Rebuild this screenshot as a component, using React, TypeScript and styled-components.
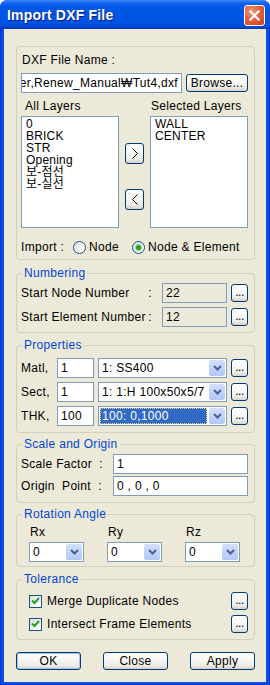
import React from 'react';
import styled, { createGlobalStyle } from 'styled-components';

const GlobalStyle = createGlobalStyle`
  html, body {
    margin: 0;
    padding: 0;
    background: #ffffff;
  }
  body {
    font-family: "Liberation Sans", "Noto Sans CJK KR", sans-serif;
    font-size: 12px;
    letter-spacing: 0.3px;
    color: #000000;
  }
  * {
    box-sizing: border-box;
  }
`;

const allLayers = ['0', 'BRICK', 'STR', 'Opening', '보-점선', '보-실선'];
const selectedLayers = ['WALL', 'CENTER'];

const Window = styled.div`
  width: 270px;
  height: 685px;
  display: flex;
  flex-direction: column;
  background: #0A4FE2;
  border-radius: 8px 8px 0 0;
  box-shadow: inset 1px 0 #0831D9, inset -1px 0 #0831D9, inset 0 -1px #0831D9;
  overflow: hidden;
`;

const TitleBar = styled.div`
  height: 29px;
  flex: none;
  display: flex;
  align-items: center;
  justify-content: space-between;
  padding: 0 5px 0 7px;
  background: linear-gradient(180deg, #3E8DF7 0%, #1566F0 10%, #0458E6 22%, #0055E5 50%, #0053E2 80%, #0346D1 93%, #0137B0 100%);
`;

const Title = styled.span`
  font-family: "Liberation Sans", sans-serif;
  font-weight: bold;
  font-size: 14px;
  letter-spacing: 0.2px;
  color: #ffffff;
  text-shadow: 1px 1px #0A1E7A;
  padding-top: 1px;
`;

const CloseButton = styled.div`
  width: 21px;
  height: 21px;
  border: 1px solid #ffffff;
  border-radius: 3px;
  background: radial-gradient(circle at 35% 30%, #F29A7E 0%, #E4603F 45%, #C9401F 100%);
  display: flex;
  align-items: center;
  justify-content: center;
  margin-top: 2px;
`;

const Client = styled.div`
  flex: 1;
  margin: 0 4px 3px 4px;
  background: #ECE9D8;
  display: flex;
  flex-direction: column;
`;

const Group = styled.fieldset<{ $mt: number; $pt: number; $pb: number }>`
  margin: ${p => p.$mt}px 11px 0 12px;
  padding: ${p => p.$pt}px 6px ${p => p.$pb}px 4px;
  border: 1px solid #D0D0BF;
  border-radius: 4px;
  min-width: 0;
`;

const Legend = styled.legend`
  padding: 0 2px;
  margin-left: 1px;
  color: #0046D5;
  font-size: 12px;
  line-height: 14px;
`;

const Text = styled.div<{ $indent?: number }>`
  line-height: 14px;
  height: 14px;
  white-space: nowrap;
  padding-left: ${p => p.$indent ?? 0}px;
`;

const Field = styled.div<{ $readonly?: boolean; $alignEnd?: boolean }>`
  height: 20px;
  border: 1px solid #7F9DB9;
  background: ${p => (p.$readonly ? '#ECE9D8' : '#ffffff')};
  padding: 1px 3px 0 3px;
  line-height: 16px;
  white-space: nowrap;
  overflow: hidden;
  min-width: 0;
  display: flex;
  justify-content: ${p => (p.$alignEnd ? 'flex-end' : 'flex-start')};
`;

const Button = styled.div<{ $w: number; $h: number; $default?: boolean }>`
  width: ${p => p.$w}px;
  height: ${p => p.$h}px;
  flex: none;
  border: 1px solid #003C74;
  border-radius: 3px;
  background: linear-gradient(180deg, #FFFFFF 0%, #F6F6F2 45%, #ECEBE6 80%, #D6D0C5 100%);
  box-shadow: ${p => (p.$default ? 'inset 0 0 0 1px #A8C4F0' : 'none')};
  display: flex;
  align-items: center;
  justify-content: center;
  line-height: 14px;
  white-space: nowrap;
`;

const DotsButton = styled(Button)`
  align-items: flex-end;
  padding-bottom: 2px;
  letter-spacing: -0.5px;
`;

const FileRow = styled.div`
  display: flex;
  align-items: center;
  gap: 4px;
  height: 20px;
  margin-top: 6px;

  & > ${Field} {
    flex: 1;
  }
`;

const LayerGrid = styled.div`
  display: grid;
  grid-template-columns: 98px 1fr 98px;
  grid-template-rows: 14px 112px;
  row-gap: 3px;
  margin-top: 6px;
`;

const ListBox = styled.div`
  border: 1px solid #7F9DB9;
  background: #ffffff;
  padding: 1px 4px;
  line-height: 12px;
  letter-spacing: 0.2px;
`;

const ListItem = styled.div`
  height: 12px;
  white-space: nowrap;
`;

const MoveButtons = styled.div`
  display: flex;
  flex-direction: column;
  align-items: center;
  gap: 25px;
  padding-top: 27px;
`;

const ImportRow = styled.div`
  display: flex;
  align-items: center;
  height: 14px;
  margin-top: 12px;
`;

const RadioOption = styled.label<{ $ml: number }>`
  display: flex;
  align-items: center;
  gap: 3px;
  margin-left: ${p => p.$ml}px;
  white-space: nowrap;
`;

const RadioDot = styled.span<{ $checked?: boolean }>`
  width: 13px;
  height: 13px;
  border-radius: 50%;
  border: 1px solid #1C5180;
  background: linear-gradient(135deg, #DCDCD7 0%, #FFFFFF 90%);
  display: inline-flex;
  align-items: center;
  justify-content: center;

  &::after {
    content: '';
    display: ${p => (p.$checked ? 'block' : 'none')};
    width: 5px;
    height: 5px;
    border-radius: 50%;
    background: #21A121;
    box-shadow: 0 0 0 1px #9AD89A;
  }
`;

const Rows = styled.div<{ $gap: number }>`
  display: grid;
  row-gap: ${p => p.$gap}px;
`;

const NumberRow = styled.div`
  display: grid;
  grid-template-columns: 1fr 65px 17px;
  column-gap: 4px;
  align-items: center;
  height: 20px;
`;

const RowLabel = styled.div`
  display: flex;
  justify-content: space-between;
  padding-right: 6px;
  line-height: 14px;
  white-space: nowrap;
`;

const PropRow = styled.div`
  display: grid;
  grid-template-columns: 32px 37px 1fr 17px;
  column-gap: 4px;
  align-items: center;
  height: 20px;
`;

const Combo = styled.div`
  height: 20px;
  border: 1px solid #7F9DB9;
  background: #ffffff;
  display: flex;
  align-items: stretch;
  padding: 1px;
  min-width: 0;
`;

const ComboText = styled.div<{ $selected?: boolean }>`
  flex: 1;
  min-width: 0;
  margin-right: 2px;
  padding: 0 2px;
  line-height: 16px;
  white-space: nowrap;
  overflow: hidden;
  color: ${p => (p.$selected ? '#ffffff' : '#000000')};
  background: ${p => (p.$selected ? '#316AC5' : 'transparent')};
  outline: ${p => (p.$selected ? '1px dotted #E8D37A' : 'none')};
  outline-offset: -1px;
`;

const ComboArrow = styled.div`
  width: 16px;
  flex: none;
  border-radius: 2px;
  background: linear-gradient(180deg, #D3E0FC 0%, #C1D3FB 50%, #B1C7F7 100%);
  display: flex;
  align-items: center;
  justify-content: center;
`;

const ScaleRow = styled.div`
  display: grid;
  grid-template-columns: 88px 1fr;
  column-gap: 4px;
  align-items: center;
  height: 20px;
`;

const AngleGrid = styled.div`
  display: grid;
  grid-template-columns: repeat(3, 55px);
  grid-template-rows: 14px 20px;
  column-gap: 23px;
  row-gap: 3px;
  padding-left: 8px;
`;

const CheckRow = styled.div`
  display: flex;
  align-items: center;
  height: 18px;
`;

const CheckBox = styled.span`
  width: 13px;
  height: 13px;
  flex: none;
  margin-left: 8px;
  margin-right: 5px;
  border: 1px solid #1C5180;
  background: linear-gradient(135deg, #DCDCD7 0%, #FFFFFF 90%);
  display: flex;
  align-items: center;
  justify-content: center;
`;

const RowSpacer = styled.div`
  flex: 1;
`;

const ButtonBar = styled.div`
  display: flex;
  justify-content: space-between;
  margin: 12px 11px 0 12px;
`;

const Chevron = ({ dir }: { dir: 'left' | 'right' }) => (
  <svg width="6" height="11" viewBox="0 0 6 11">
    <polyline
      points={dir === 'right' ? '0.5,0.5 5.5,5.5 0.5,10.5' : '5.5,0.5 0.5,5.5 5.5,10.5'}
      fill="none"
      stroke="#000"
      strokeWidth="1"
    />
  </svg>
);

const DropArrow = () => (
  <svg width="9" height="6" viewBox="0 0 9 6">
    <polyline points="1,1 4.5,4.5 8,1" fill="none" stroke="#4D6185" strokeWidth="2" />
  </svg>
);

const ComboBox = ({ value, selected }: { value: string; selected?: boolean }) => (
  <Combo>
    <ComboText $selected={selected}>{value}</ComboText>
    <ComboArrow>
      <DropArrow />
    </ComboArrow>
  </Combo>
);

const Dots = () => (
  <DotsButton $w={17} $h={18}>...</DotsButton>
);

const Check = () => (
  <CheckBox>
    <svg width="9" height="8" viewBox="0 0 9 8">
      <polyline points="1,3.5 3.5,6 8,1" fill="none" stroke="#21A121" strokeWidth="2" />
    </svg>
  </CheckBox>
);

export default function App() {
  return (
    <>
      <GlobalStyle />
      <Window>
        <TitleBar>
          <Title>Import DXF File</Title>
          <CloseButton>
            <svg width="11" height="11" viewBox="0 0 11 11">
              <path d="M1.5 1.5 L9.5 9.5 M9.5 1.5 L1.5 9.5" stroke="#fff" strokeWidth="2.2" strokeLinecap="square" />
            </svg>
          </CloseButton>
        </TitleBar>
        <Client>
          <Group $mt={17} $pt={6} $pb={5}>
            <Text $indent={1}>DXF File Name :</Text>
            <FileRow>
              <Field $alignEnd>er,Renew_Manual₩Tut4,dxf</Field>
              <Button $w={62} $h={18}>Browse...</Button>
            </FileRow>
            <LayerGrid>
              <Text $indent={4}>All Layers</Text>
              <span />
              <Text $indent={1}>Selected Layers</Text>
              <ListBox>
                {allLayers.map(l => (
                  <ListItem key={l}>{l}</ListItem>
                ))}
              </ListBox>
              <MoveButtons>
                <Button $w={19} $h={21}>
                  <Chevron dir="right" />
                </Button>
                <Button $w={19} $h={21}>
                  <Chevron dir="left" />
                </Button>
              </MoveButtons>
              <ListBox>
                {selectedLayers.map(l => (
                  <ListItem key={l}>{l}</ListItem>
                ))}
              </ListBox>
            </LayerGrid>
            <ImportRow>
              <span>Import :</span>
              <RadioOption $ml={9}>
                <RadioDot />
                Node
              </RadioOption>
              <RadioOption $ml={13}>
                <RadioDot $checked />
                Node &amp; Element
              </RadioOption>
            </ImportRow>
          </Group>

          <Group $mt={6} $pt={3} $pb={5}>
            <Legend>Numbering</Legend>
            <Rows $gap={4}>
              <NumberRow>
                <RowLabel>
                  <span>Start Node Number</span>
                  <span>:</span>
                </RowLabel>
                <Field $readonly>22</Field>
                <Dots />
              </NumberRow>
              <NumberRow>
                <RowLabel>
                  <span>Start Element Number</span>
                  <span>:</span>
                </RowLabel>
                <Field $readonly>12</Field>
                <Dots />
              </NumberRow>
            </Rows>
          </Group>

          <Group $mt={5} $pt={6} $pb={6}>
            <Legend>Properties</Legend>
            <Rows $gap={4}>
              <PropRow>
                <Text>Matl,</Text>
                <Field>1</Field>
                <ComboBox value="1: SS400" />
                <Dots />
              </PropRow>
              <PropRow>
                <Text>Sect,</Text>
                <Field>1</Field>
                <ComboBox value="1: 1:H 100x50x5/7" />
                <Dots />
              </PropRow>
              <PropRow>
                <Text>THK,</Text>
                <Field>100</Field>
                <ComboBox value="100: 0,1000" selected />
                <Dots />
              </PropRow>
            </Rows>
          </Group>

          <Group $mt={4} $pt={3} $pb={6}>
            <Legend>Scale and Origin</Legend>
            <Rows $gap={2}>
              <ScaleRow>
                <Text>Scale Factor&nbsp; :</Text>
                <Field>1</Field>
              </ScaleRow>
              <ScaleRow>
                <Text>Origin&nbsp; Point&nbsp; :</Text>
                <Field>0 , 0 , 0</Field>
              </ScaleRow>
            </Rows>
          </Group>

          <Group $mt={4} $pt={4} $pb={4}>
            <Legend>Rotation Angle</Legend>
            <AngleGrid>
              <Text $indent={1}>Rx</Text>
              <Text $indent={1}>Ry</Text>
              <Text $indent={1}>Rz</Text>
              <ComboBox value="0" />
              <ComboBox value="0" />
              <ComboBox value="0" />
            </AngleGrid>
          </Group>

          <Group $mt={5} $pt={6} $pb={6}>
            <Legend>Tolerance</Legend>
            <Rows $gap={5}>
              <CheckRow>
                <Check />
                <span>Merge Duplicate Nodes</span>
                <RowSpacer />
                <Dots />
              </CheckRow>
              <CheckRow>
                <Check />
                <span>Intersect Frame Elements</span>
                <RowSpacer />
                <Dots />
              </CheckRow>
            </Rows>
          </Group>

          <ButtonBar>
            <Button $w={65} $h={18} $default>OK</Button>
            <Button $w={65} $h={18}>Close</Button>
            <Button $w={65} $h={18}>Apply</Button>
          </ButtonBar>
        </Client>
      </Window>
    </>
  );
}
